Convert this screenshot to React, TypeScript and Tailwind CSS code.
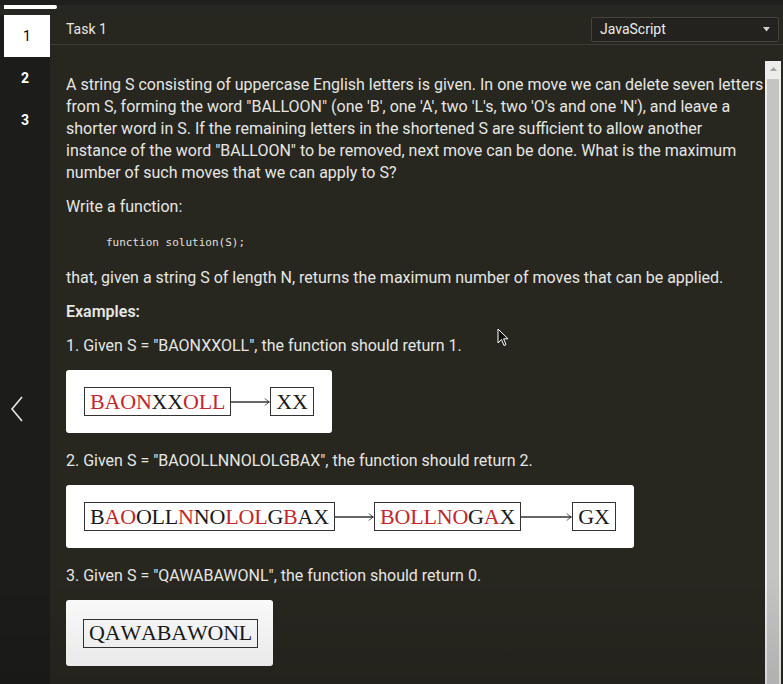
import React from "react";

const RED = "text-[#c4262e]";

function Letters({ text, red }: { text: string; red: number[] }) {
  return (
    <>
      {text.split("").map((ch, i) => (
        <span key={i} className={red.includes(i) ? RED : "text-[#1a1a1a]"}>
          {ch}
        </span>
      ))}
    </>
  );
}

function Word({ text, red }: { text: string; red: number[] }) {
  return (
    <div className="border-[1.5px] border-[#333] px-[5px] h-[29px] flex items-center text-[22px] leading-none font-['Liberation_Serif',serif] tracking-[-0.2px]">
      <Letters text={text} red={red} />
    </div>
  );
}

function Arrow({ w }: { w: number }) {
  return (
    <svg width={w} height="10" viewBox={`0 0 ${w} 10`} className="shrink-0">
      <line x1="0" y1="5" x2={w - 1} y2="5" stroke="#333" strokeWidth="1.3" />
      <path d={`M${w - 5} 1.5 Q${w - 3} 4 ${w - 0.5} 5 Q${w - 3} 6 ${w - 5} 8.5`} fill="none" stroke="#333" strokeWidth="1" />
    </svg>
  );
}

function Figure({ children }: { children: React.ReactNode }) {
  return (
    <div className="inline-flex items-center bg-white rounded-[3px] px-[18px] h-[63px]">{children}</div>
  );
}

export default function App() {
  return (
    <div className="relative w-[783px] h-[684px] overflow-hidden bg-[#1c1c1a] font-['Roboto','Liberation_Sans',sans-serif] text-[#e6e6e4]">
      {/* top strip */}
      <div className="h-[15px] bg-[#262623] border-t-[5px] border-[#1f1f1e]">
        <div className="ml-1 w-[53px] h-[4px] bg-white rounded-r-[2px]" />
      </div>

      <div className="flex h-[669px]">
        {/* sidebar */}
        <div className="w-[50px] shrink-0 flex flex-col bg-[#1c1c1a]">
          <div className="ml-1 h-[42px] bg-white text-black text-[14px] flex items-center justify-center">1</div>
          <div className="h-[42px] flex items-center justify-center text-[14px] font-bold text-white">2</div>
          <div className="h-[42px] flex items-center justify-center text-[14px] font-bold text-white">3</div>
          <div className="mt-[255px] pl-[10px]">
            <svg width="14" height="26" viewBox="0 0 14 26">
              <path d="M12 1 L2 13 L12 25" fill="none" stroke="#e8e8e8" strokeWidth="1.6" />
            </svg>
          </div>
        </div>

        {/* main */}
        <div className="flex-1 flex flex-col bg-[#27261f]">
          <div className="h-[30px] border-b border-[#3d3c37] flex items-center justify-between pl-4 pr-[4px]">
            <span className="text-[14px] text-[#e8e8e6]">Task 1</span>
            <div className="w-[188px] h-[25px] mt-[-1px] border border-[#44433e] rounded-[2px] bg-[#23221e] flex items-center justify-between pl-[8px] pr-[8px]">
              <span className="text-[14px] text-[#ececea]">JavaScript</span>
              <svg width="7" height="5" viewBox="0 0 7 5">
                <path d="M0 0 H7 L3.5 4.5 Z" fill="#cfcfcf" />
              </svg>
            </div>
          </div>

          <div className="flex flex-1 pt-[16px]">
            <div className="w-[715px] pl-4 pt-[13px] text-[16px] leading-[22px]">
              <p className="mb-3">
                A string S consisting of uppercase English letters is given. In one move we can delete seven letters
                from S, forming the word "BALLOON" (one 'B', one 'A', two 'L's, two 'O's and one 'N'), and leave a
                shorter word in S. If the remaining letters in the shortened S are sufficient to allow another
                instance of the word "BALLOON" to be removed, next move can be done. What is the maximum
                number of such moves that we can apply to S?
              </p>
              <p className="mb-[14px]">Write a function:</p>
              <pre className="pl-10 mb-[13px] font-['DejaVu_Sans_Mono',monospace] text-[11px] leading-[22px] text-[#e0e0de]">
                function solution(S);
              </pre>
              <p className="mb-3">that, given a string S of length N, returns the maximum number of moves that can be applied.</p>
              <p className="mb-3 font-semibold">Examples:</p>
              <p className="mb-[13px]">1. Given S = "BAONXXOLL", the function should return 1.</p>
              <Figure>
                <Word text="BAONXXOLL" red={[0, 1, 2, 3, 6, 7, 8]} />
                <Arrow w={39} />
                <Word text="XX" red={[]} />
              </Figure>
              <p className="mt-[17px] mb-[13px]">2. Given S = "BAOOLLNNOLOLGBAX", the function should return 2.</p>
              <Figure>
                <Word text="BAOOLLNNOLOLGBAX" red={[1, 2, 6, 9, 10, 11, 13]} />
                <Arrow w={39} />
                <Word text="BOLLNOGAX" red={[0, 1, 2, 3, 4, 5, 7]} />
                <Arrow w={51} />
                <Word text="GX" red={[]} />
              </Figure>
              <p className="mt-[17px] mb-[13px]">3. Given S = "QAWABAWONL", the function should return 0.</p>
              <div className="inline-flex items-center bg-white rounded-[3px] px-[17px] w-[207px] h-[66px]">
                <Word text="QAWABAWONL" red={[]} />
              </div>
            </div>

            {/* scrollbar */}
            <div className="w-[16px] flex flex-col bg-[#ececec]">
              <div className="h-[16px] flex items-center justify-center">
                <svg width="7" height="4" viewBox="0 0 7 4">
                  <path d="M0 4 L3.5 0 L7 4 Z" fill="#a3a3a3" />
                </svg>
              </div>
              <div className="flex-1 mx-[2px] mt-[2px] bg-[#c4c4c4]" />
            </div>
          </div>
        </div>
      </div>

      {/* mouse cursor */}
      <svg className="absolute left-[497px] top-[328px]" width="12" height="19" viewBox="0 0 12 19">
        <path d="M1 1 L1 15 L4.5 11.5 L7 17.5 L9 16.6 L6.6 10.8 L11 10.8 Z" fill="#111" stroke="#fff" strokeWidth="1" />
      </svg>

      {/* bottom shade */}
      <div className="absolute left-0 right-0 bottom-0 h-[110px] bg-gradient-to-b from-transparent to-black/10 pointer-events-none" />
    </div>
  );
}
